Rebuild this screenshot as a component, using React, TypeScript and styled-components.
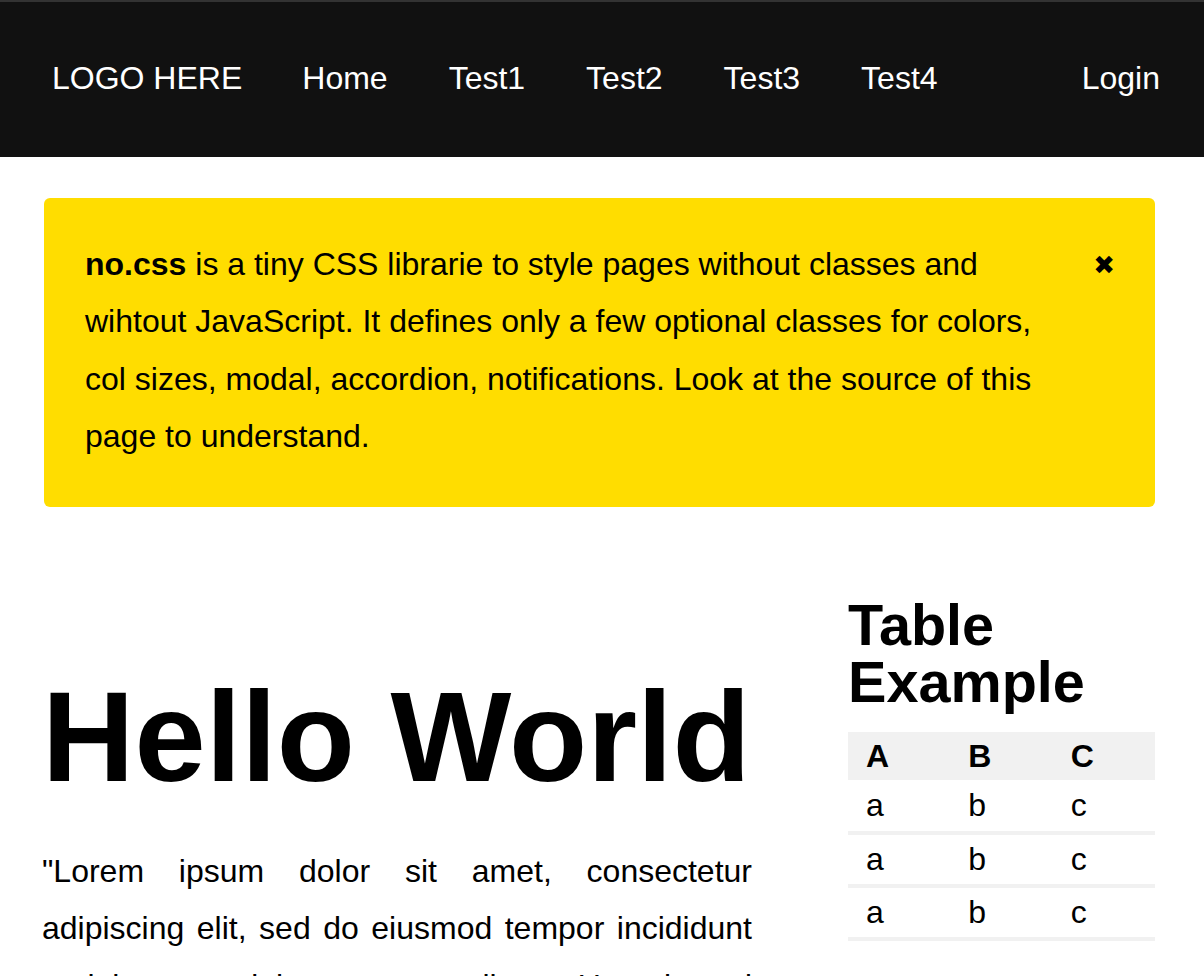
import React from "react";
import styled, { createGlobalStyle } from "styled-components";

const GlobalStyle = createGlobalStyle`
  html, body {
    margin: 0;
    padding: 0;
    background: #fff;
  }
  body {
    font-family: "Liberation Sans", Helvetica, Arial, sans-serif;
    color: #000;
  }
  * { box-sizing: border-box; }
`;

const NavBar = styled.header`
  display: flex;
  align-items: center;
  height: 157px;
  background: #111;
  border-top: 2px solid #333;
  padding: 0 44px 4px 52px;
  color: #fff;
  font-size: 32px;
`;

const NavList = styled.nav`
  display: flex;
  align-items: center;
  gap: 61px;
  flex: 1;
`;

const Logo = styled.a`
  color: #fff;
  text-decoration: none;
  line-height: 1;
  margin-right: -1px;
`;

const NavItem = styled.a<{ $push?: boolean }>`
  color: #fff;
  text-decoration: none;
  line-height: 1;
  margin-left: ${(p) => (p.$push ? "auto" : "0")};
`;

const Main = styled.main`
  padding: 41px 49px 0 44px;
`;

const Alert = styled.section`
  position: relative;
  background: #ffdd00;
  border-radius: 6px;
  padding: 37.5px 94px 41px 41px;
  font-size: 32px;
  line-height: 57.6px;
`;

const AlertText = styled.p`
  margin: 0;
`;

const Close = styled.span`
  position: absolute;
  top: 54px;
  right: 40px;
  font-family: "DejaVu Sans", sans-serif;
  font-size: 26px;
  line-height: 1;
  cursor: pointer;
`;

const Columns = styled.div`
  display: grid;
  grid-template-columns: 1fr 307px;
  column-gap: 96px;
  align-items: start;
  margin-top: 90px;
`;

const Column = styled.div`
  min-width: 0;
`;

const Title = styled.h1`
  margin: 76px 0 42px -2px;
  font-size: 128px;
  line-height: 128px;
  font-weight: 700;
  white-space: nowrap;
`;

const Paragraph = styled.p`
  margin: 0 0 0 -2px;
  font-size: 32px;
  line-height: 57.6px;
  text-align: justify;
`;

const SideTitle = styled.h2`
  margin: 0 0 20px;
  font-size: 57.6px;
  line-height: 57.6px;
  font-weight: 700;
`;

const Table = styled.table`
  width: 100%;
  border-collapse: collapse;
  table-layout: fixed;
  font-size: 32px;
`;

const HeadCell = styled.th`
  background: #f1f1f1;
  text-align: left;
  font-weight: 700;
  height: 48px;
  padding: 0 0 0 18px;
`;

const Row = styled.tr`
  border-bottom: 4px solid #f1f1f1;
`;

const Cell = styled.td`
  height: 53px;
  padding: 0 0 0 18px;
`;

const rows = [
  ["a", "b", "c"],
  ["a", "b", "c"],
  ["a", "b", "c"],
];

export default function App() {
  return (
    <>
      <GlobalStyle />
      <NavBar>
        <NavList>
          <Logo href="#">LOGO HERE</Logo>
          <NavItem href="#">Home</NavItem>
          <NavItem href="#">Test1</NavItem>
          <NavItem href="#">Test2</NavItem>
          <NavItem href="#">Test3</NavItem>
          <NavItem href="#">Test4</NavItem>
          <NavItem href="#" $push>
            Login
          </NavItem>
        </NavList>
      </NavBar>
      <Main>
        <Alert>
          <AlertText>
            <strong>no.css</strong> is a tiny CSS librarie to style pages without classes and
            wihtout JavaScript. It defines only a few optional classes for colors, col sizes,
            modal, accordion, notifications. Look at the source of this page to understand.
          </AlertText>
          <Close>✖</Close>
        </Alert>
        <Columns>
          <Column>
            <Title>Hello World</Title>
            <Paragraph>
              "Lorem ipsum dolor sit amet, consectetur adipiscing elit, sed do eiusmod tempor
              incididunt ut labore et dolore magna aliqua. Ut enim ad minim veniam, quis nostrud
              exercitation ullamco laboris nisi ut aliquip ex ea commodo consequat. Duis aute irure
              dolor in reprehenderit in voluptate velit esse cillum dolore eu fugiat nulla pariatur.
              Excepteur sint occaecat cupidatat non proident, sunt in culpa qui officia deserunt
              mollit anim id est laborum."
            </Paragraph>
          </Column>
          <Column>
            <SideTitle>Table Example</SideTitle>
            <Table>
              <thead>
                <tr>
                  <HeadCell>A</HeadCell>
                  <HeadCell>B</HeadCell>
                  <HeadCell>C</HeadCell>
                </tr>
              </thead>
              <tbody>
                {rows.map((r, i) => (
                  <Row key={i}>
                    {r.map((v, j) => (
                      <Cell key={j}>{v}</Cell>
                    ))}
                  </Row>
                ))}
              </tbody>
            </Table>
          </Column>
        </Columns>
      </Main>
    </>
  );
}
